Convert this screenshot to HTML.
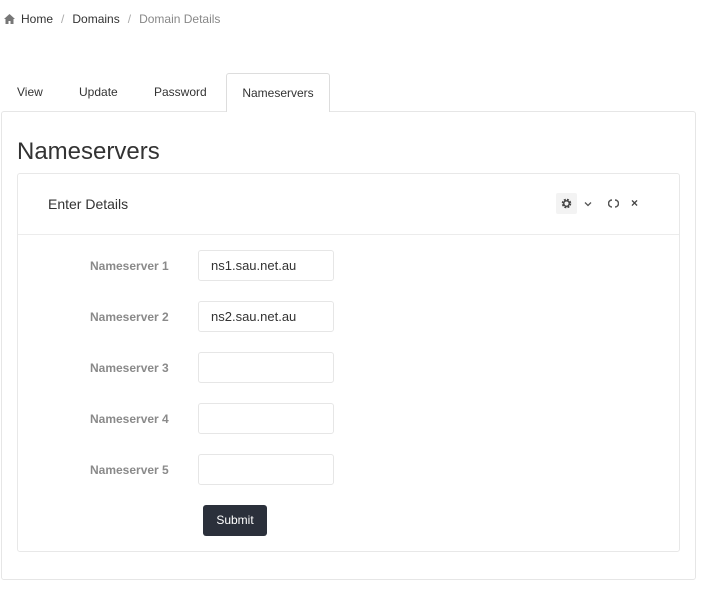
<!DOCTYPE html>
<html><head><style>
*{box-sizing:border-box}
body{margin:0;width:711px;height:592px;background:#fff;font-family:"Liberation Sans",sans-serif;font-size:12px;color:#333;position:relative;overflow:hidden}
.a{position:absolute}
.bc{top:12px;left:4px;color:#333;font-size:12px}
.bc span{color:#aaa;margin:0 8px}
.tab{top:85px;font-size:12px;color:#333}
.act{left:226px;top:73px;width:104px;height:39px;border:1px solid #ddd;border-bottom:none;border-radius:3px 3px 0 0;background:#fff;z-index:2;text-align:center;padding-top:12px;font-size:12px}
.panel{left:1px;top:111px;width:695px;height:469px;border:1px solid #e6e6e6;border-radius:3px}
h1{position:absolute;left:17px;top:138px;margin:0;font-weight:normal;font-size:24px;color:#333}
.card{left:17px;top:173px;width:663px;height:379px;border:1px solid #e8e8e8;border-radius:3px}
.hd{left:0;top:0;width:661px;height:61px;border-bottom:1px solid #ececec}
.lbl{left:72px;font-weight:bold;color:#8a8a8a;font-size:12px}
.inp{left:180px;width:136px;height:31px;border:1px solid #e6e6e6;border-radius:3px;padding:7px 0 0 12px;font-size:13px;color:#333}
.btn{left:185px;top:331px;width:64px;height:31px;background:#2b303b;border-radius:3px;color:#fff;text-align:center;padding-top:8px;font-size:12px}
</style></head><body>
<div class="a bc"><svg width="11" height="10" viewBox="0 0 11 10" style="vertical-align:-1px;margin-right:6px"><path d="M5.5 0L0 5h1.5v5h3V7h2v3h3V5H11z" fill="#777"/></svg>Home<span>/</span>Domains<span>/</span><b style="font-weight:normal;color:#888">Domain Details</b></div>
<div class="a tab" style="left:17px">View</div>
<div class="a tab" style="left:79px">Update</div>
<div class="a tab" style="left:154px">Password</div>
<div class="a act">Nameservers</div>
<div class="a panel"></div>
<h1>Nameservers</h1>
<div class="a card">
 <div class="a hd">
  <div class="a" style="left:30px;top:22px;font-size:14px;color:#333">Enter Details</div>
  <div class="a" style="left:538px;top:19px;width:21px;height:21px;background:#f3f3f3;border-radius:2px"></div>
  <svg class="a" style="left:543px;top:24px" width="11" height="11" viewBox="0 0 12 12"><circle cx="6" cy="6" r="4" fill="none" stroke="#444" stroke-width="2.4" stroke-dasharray="2 1.2"/><circle cx="6" cy="6" r="3" fill="none" stroke="#444" stroke-width="1.5"/></svg>
  <svg class="a" style="left:566px;top:27px" width="8" height="6" viewBox="0 0 8 6"><path d="M1 1.5l3 3 3-3" fill="none" stroke="#555" stroke-width="1.3"/></svg>
  <svg class="a" style="left:590px;top:24px" width="11" height="11" viewBox="0 0 11 11"><path d="M4 2A3.5 3.5 0 0 0 4 9M7 2A3.5 3.5 0 0 1 7 9" fill="none" stroke="#555" stroke-width="1.5"/></svg>
  <div class="a" style="left:613px;top:22px;font-size:12px;color:#444;font-weight:bold">×</div>
 </div>
 <div class="a lbl" style="top:85px">Nameserver 1</div><div class="a inp" style="top:76px">ns1.sau.net.au</div>
 <div class="a lbl" style="top:136px">Nameserver 2</div><div class="a inp" style="top:127px">ns2.sau.net.au</div>
 <div class="a lbl" style="top:187px">Nameserver 3</div><div class="a inp" style="top:178px"></div>
 <div class="a lbl" style="top:238px">Nameserver 4</div><div class="a inp" style="top:229px"></div>
 <div class="a lbl" style="top:289px">Nameserver 5</div><div class="a inp" style="top:280px"></div>
 <div class="a btn">Submit</div>
</div>
</body></html>
